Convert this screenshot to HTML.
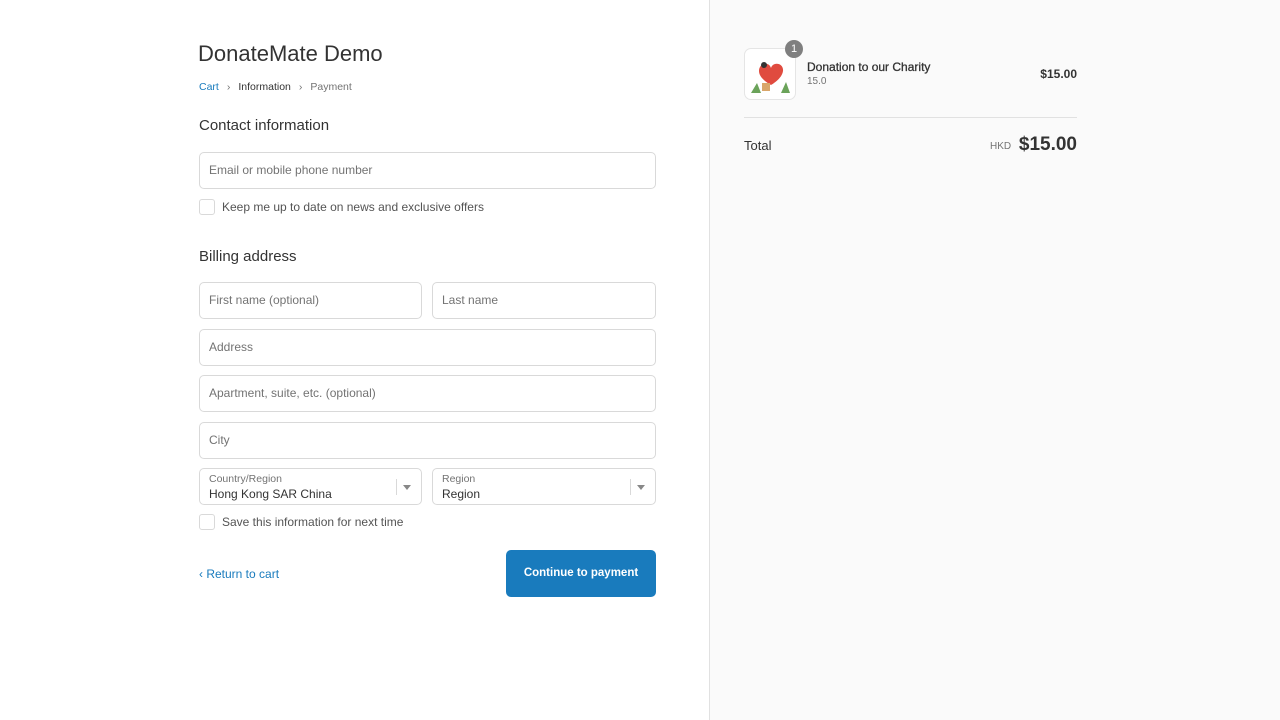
<html><head><style>
body{margin:0;width:1280px;height:720px;position:relative;font-family:"Liberation Sans",sans-serif;background:#fff;overflow:hidden;color:#333}
.a{position:absolute}
.in{position:absolute;border:1px solid #d9d9d9;border-radius:5px;box-sizing:border-box;height:37px;font-size:12px;color:#737373;padding-left:9px;line-height:35px;background:#fff}
.cb{position:absolute;width:14px;height:14px;border:1px solid #d9d9d9;border-radius:3px;background:#fff}
.t{font-size:12px;color:#545454}
.sel .l{position:absolute;left:9px;top:4px;font-size:10.5px;line-height:13px;color:#737373}
.sel .v{position:absolute;left:9px;top:18px;font-size:12px;line-height:15px;color:#333}
.sel .d{position:absolute;right:24px;top:10px;width:1px;height:16px;background:#d9d9d9}
.sel .ar{position:absolute;right:10px;top:16px;border-left:4px solid transparent;border-right:4px solid transparent;border-top:5px solid #888}
</style></head><body>
<div class="a" style="left:709px;top:0;width:571px;height:720px;background:#fafafa;border-left:1px solid #e1e1e1"></div>
<div class="a" style="left:198px;top:41px;font-size:22px;color:#333">DonateMate Demo</div>
<div class="a" style="left:199px;top:81px;font-size:10.5px;color:#737373"><span style="color:#197bbd">Cart</span><span style="margin:0 8px">&#8250;</span><span style="color:#333">Information</span><span style="margin:0 8px">&#8250;</span>Payment</div>
<div class="a" style="left:199px;top:117px;font-size:15px;color:#333">Contact information</div>
<div class="in" style="left:199px;top:152px;width:457px">Email or mobile phone number</div>
<div class="cb" style="left:199px;top:199px"></div>
<div class="a t" style="left:222px;top:200px">Keep me up to date on news and exclusive offers</div>
<div class="a" style="left:199px;top:248px;font-size:15px;color:#333">Billing address</div>
<div class="in" style="left:199px;top:282px;width:223px">First name (optional)</div>
<div class="in" style="left:432px;top:282px;width:224px">Last name</div>
<div class="in" style="left:199px;top:329px;width:457px">Address</div>
<div class="in" style="left:199px;top:375px;width:457px">Apartment, suite, etc. (optional)</div>
<div class="in" style="left:199px;top:422px;width:457px">City</div>
<div class="in sel" style="left:199px;top:468px;width:223px"><span class="l">Country/Region</span><span class="v">Hong Kong SAR China</span><span class="d"></span><span class="ar"></span></div>
<div class="in sel" style="left:432px;top:468px;width:224px"><span class="l">Region</span><span class="v">Region</span><span class="d"></span><span class="ar"></span></div>
<div class="cb" style="left:199px;top:514px"></div>
<div class="a t" style="left:222px;top:515px">Save this information for next time</div>
<div class="a" style="left:199px;top:567px;font-size:12px;color:#197bbd">&#8249; Return to cart</div>
<div class="a" style="left:506px;top:550px;width:150px;height:47px;background:#197bbd;border-radius:5px;color:#fff;font-size:11.5px;font-weight:bold;text-align:center;line-height:47px">Continue to payment</div>
<div class="a" style="left:744px;top:48px;width:50px;height:50px;border:1px solid #e5e5e5;border-radius:7px;background:#fff;overflow:hidden">
<svg width="50" height="50"><path d="M14 22c0-8 10-10 12-3 2-7 13-5 12 3-1 8-12 14-12 14S14 30 14 22z" fill="#e04b3f"/><path d="M6 44l6-10 4 10zM36 44l5-11 4 11z" fill="#6ba35a"/><rect x="17" y="34" width="8" height="8" fill="#d9a66a"/><circle cx="19" cy="16" r="3" fill="#333"/></svg></div>
<div class="a" style="left:785px;top:40px;width:18px;height:18px;border-radius:50%;background:#7f7f7f;color:#fff;font-size:11px;text-align:center;line-height:18px">1</div>
<div class="a" style="left:807px;top:60px;font-size:12px;color:#333;-webkit-text-stroke:0.3px #333">Donation to our Charity</div>
<div class="a" style="left:807px;top:76px;font-size:10px;color:#737373">15.0</div>
<div class="a" style="left:1000px;top:67px;width:77px;text-align:right;font-size:12px;font-weight:bold;color:#333">$15.00</div>
<div class="a" style="left:744px;top:117px;width:333px;height:1px;background:#e1e1e1"></div>
<div class="a" style="left:744px;top:138px;font-size:13px;color:#333">Total</div>
<div class="a" style="left:990px;top:141px;font-size:10px;color:#737373">HKD</div>
<div class="a" style="left:1000px;top:134px;width:77px;text-align:right;font-size:19px;font-weight:bold;color:#333">$15.00</div>
</body></html>
